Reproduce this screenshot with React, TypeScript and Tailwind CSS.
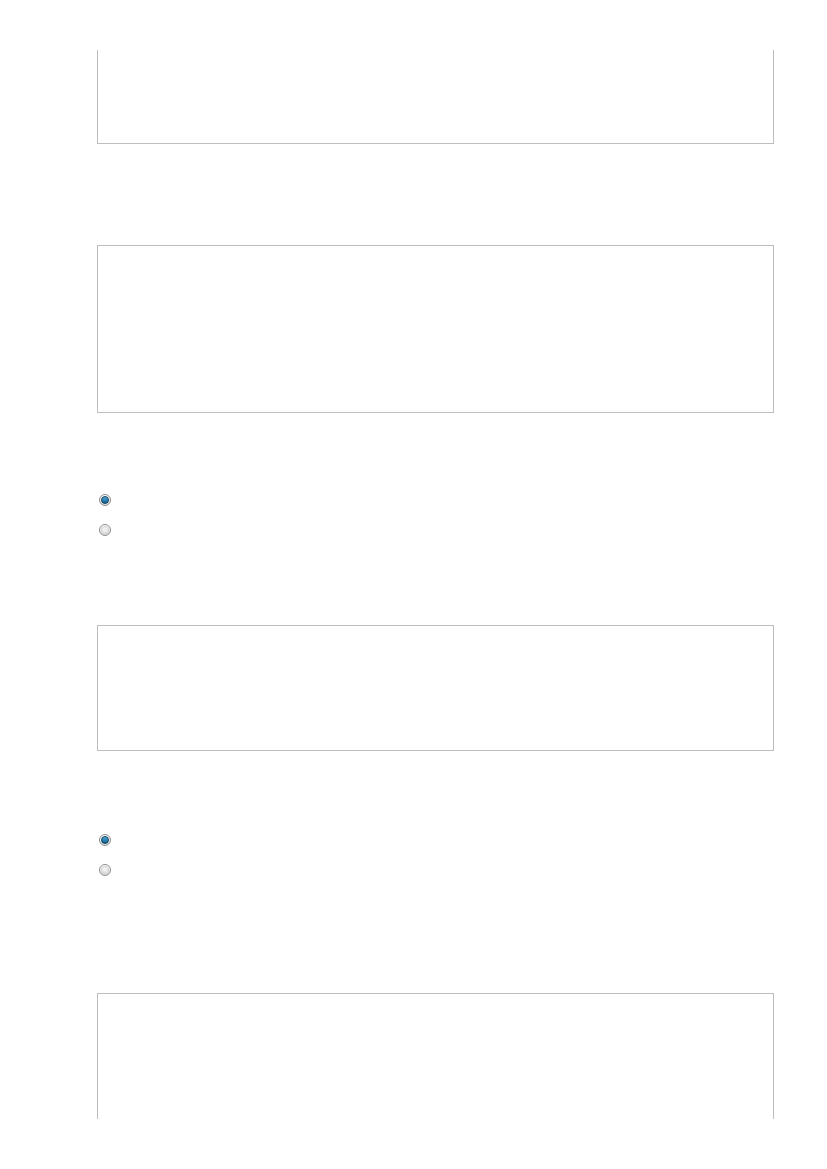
import React from 'react';

const Field: React.FC<{ className: string }> = ({ className }) => (
  <div className={`bg-white border-[#bdbdbd] ${className}`} />
);

const Radio: React.FC<{ checked?: boolean }> = ({ checked }) => (
  <span className="ml-[2px] flex h-[12px] w-[12px] items-center justify-center rounded-full border border-[#8e8e8e] bg-gradient-to-b from-[#ffffff] to-[#dcdcdc]">
    {checked ? (
      <span className="h-[8px] w-[8px] rounded-full border border-[#0b3f5e] bg-gradient-to-b from-[#4aa8d8] to-[#0e5f8f]" />
    ) : (
      <span className="h-[8px] w-[8px] rounded-full border border-[#d0d0d0] bg-gradient-to-b from-[#f6f6f6] to-[#e6e6e6]" />
    )}
  </span>
);

export default function App() {
  return (
    <div className="min-h-[1169px] w-[827px] bg-white" style={{ fontFamily: '"Liberation Sans", Arial, sans-serif' }}>
      <div className="ml-[97px] flex w-[677px] flex-col pt-[50px]">
        <Field className="h-[94px] border-x border-b" />

        <Field className="mt-[101px] h-[168px] border" />

        <div className="mt-[81px] flex flex-col gap-[18px]">
          <Radio checked />
          <Radio />
        </div>

        <Field className="mt-[89px] h-[126px] border" />

        <div className="mt-[83px] flex flex-col gap-[18px]">
          <Radio checked />
          <Radio />
        </div>

        <Field className="mt-[117px] h-[126px] border-x border-t" />
      </div>
    </div>
  );
}
